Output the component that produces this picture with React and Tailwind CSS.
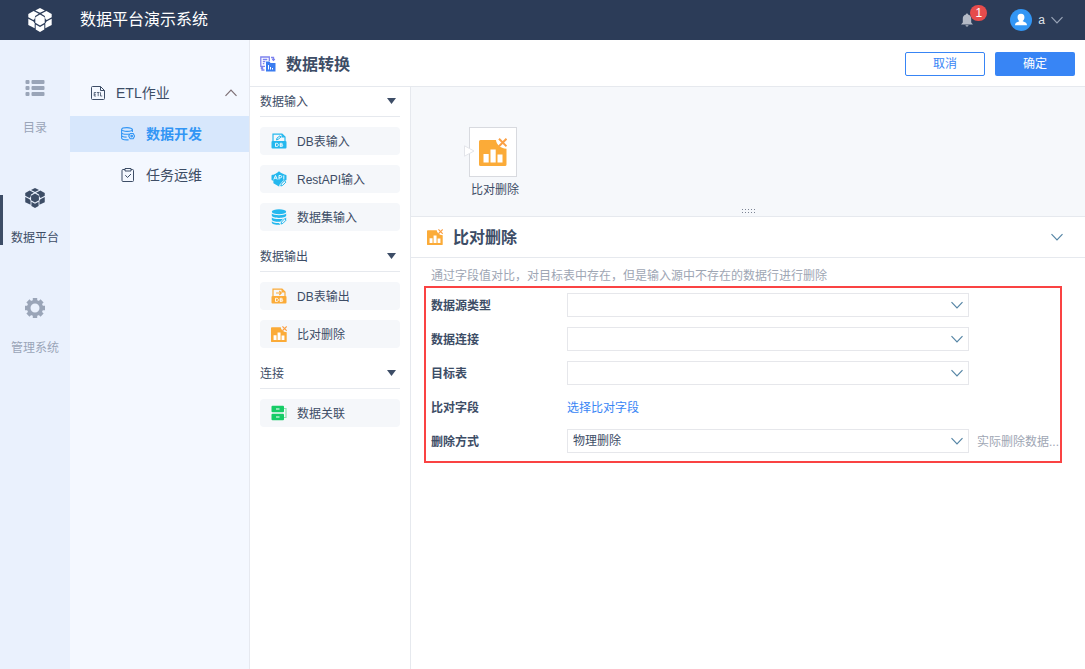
import React from "react";

function CubeIcon({ className }) {
  return (
    <svg viewBox="0 0 24 24" className={className} fill="currentColor">
      <path d="M12 0l4.800 2.400L12 4.800 7.200 2.400z" />
      <path d="M5.600 3l5.200 2.700-3.600 2.200-.6 3L5.300 12 .3 9.200V6z" />
      <path d="M18.400 3l-5.200 2.700 3.600 2.200.6 3 1.300 1.100 5-2.800V6z" />
      <path d="M12 6.600l4.700 2.700v5.400L12 17.400l-4.700-2.700V9.300z" />
      <path d="M.3 10.800l5.200 2.600 1.200 2v4.800L.3 17z" />
      <path d="M23.700 10.800l-5.200 2.600-1.200 2v4.800l6.400-3.200z" />
      <path d="M7.700 16.600l4.300 2.300 4.300-2.300v5L12 24l-4.300-2.400z" />
    </svg>
  );
}

function ListIcon({ className }) {
  return (
    <svg viewBox="0 0 20 20" className={className} fill="currentColor">
      {[2, 8, 14].map((y) => (
        <g key={y}>
          <rect x="0.500" y={y} width="4" height="4" rx="1" />
          <rect x="6.500" y={y} width="13" height="4" rx="1" />
        </g>
      ))}
    </svg>
  );
}

function GearIcon({ className }) {
  return (
    <svg viewBox="0 0 20 20" className={className} fill="none" stroke="currentColor">
      <circle cx="10" cy="10" r="6.300" strokeWidth="3.600" />
      {[0, 45, 90, 135].map((a) => (
        <path key={a} transform={`rotate(${a} 10 10)`} d="M10 0v3M10 17v3" strokeWidth="4.400" />
      ))}
    </svg>
  );
}

function EtlIcon({ className }) {
  return (
    <svg viewBox="0 0 14 14" className={className} fill="none" stroke="currentColor">
      <path d="M9.500.5h-8a1 1 0 0 0-1 1v11a1 1 0 0 0 1 1h11a1 1 0 0 0 1-1v-8zM9.500.5v4h4" />
      <path strokeWidth=".8" d="M5 6.500H3.200v3.500H5M3.200 8.300h1.600M5.800 6.500h2.700M7.200 6.500v3.700M9.500 6.300V10h1.700" />
    </svg>
  );
}

function StackIcon({ className }) {
  return (
    <svg viewBox="0 0 14 14" className={className} fill="none" stroke="currentColor" strokeWidth="1.100">
      <ellipse cx="6" cy="2.500" rx="5.400" ry="1.900" />
      <path d="M.6 2.500v8.500c0 1 2.200 1.900 5 1.900h2M.6 5.400c0 1 2.400 1.900 5.400 1.900.8 0 1.500 0 2.200-.2M.6 8.200c0 1 2.200 1.900 5 1.900M11.400 2.500v2.600" />
      <path d="M9.200 6.500h3l1.400 2.600-1.400 2.600h-3L7.700 9.100z" />
      <circle cx="10.700" cy="9.100" r=".8" />
    </svg>
  );
}

function TaskIcon({ className }) {
  return (
    <svg viewBox="0 0 14 14" className={className} fill="none" stroke="currentColor">
      <path d="M4 1.500H2a1 1 0 0 0-1 1v10a1 1 0 0 0 1 1h9.500a1 1 0 0 0 1-1v-10a1 1 0 0 0-1-1H10" />
      <path d="M4 .5h6v2.500H4zM4.300 7.200l2.200 2.300L10 6" />
    </svg>
  );
}

function TransformIcon({ className }) {
  return (
    <svg viewBox="0 0 16 16" className={className}>
      <g fill="none" stroke="#7d83ee" strokeWidth="1.300">
        <path d="M5 10.300H.8V1h8.500v4M2.800 3.500h4.500M2.800 5.600h2.500M2.800 7.700h1.500" />
        <path d="M11 1.500h2.500v2.500M12.200 3l1.300 1.300L14.800 3M4.500 14H2v-2.500M.8 12.500L2 11.300l1.200 1.200" />
      </g>
      <path fill="#3a7cf0" d="M6 5.500h3.500l1 1.500H15.500V15.500H6z" />
      <path stroke="#fff" strokeWidth="1" d="M8.500 9v4.500M10.500 11v2.500M12.500 12v1.500" />
    </svg>
  );
}

function DbFileIcon({ className, output }) {
  return (
    <svg viewBox="0 0 16 16" className={className}>
      <path d="M2 8V1.200h9L14 4v4" fill="none" stroke="currentColor" strokeWidth="1.200" />
      <path d="M10.500 1v3.500H14z" fill="currentColor" />
      {output ? (
        <path d="M5 5h5M8.300 3L10.300 5 8.300 7" fill="none" stroke="currentColor" strokeWidth="1.100" />
      ) : (
        <path d="M5.500 7l.5-2 3-2.200 1 1.200-2.800 2.300z" fill="none" stroke="currentColor" />
      )}
      <rect x=".5" y="8" width="15" height="7.500" rx="1" fill="currentColor" />
      <path
        fill="none"
        stroke="#fff"
        strokeWidth=".9"
        d="M4.500 10.300v3.200h1.200c2.200 0 2.200-3.200 0-3.200zM9.200 10.300v3.200h1.400c1.500 0 1.400-1.600 0-1.600H9.200h1.300c1.200 0 1.200-1.600 0-1.600z"
      />
    </svg>
  );
}

function ApiIcon({ className }) {
  return (
    <svg viewBox="0 0 16 16" className={className}>
      <path fill="currentColor" d="M8 .3l1.800 1.500 3.800 1.700V11L8 15.500l-5.600-3.200V4L6.200 1.800z" />
      <rect x=".5" y="3.800" width="15" height="5.600" rx="1" fill="currentColor" />
      <path fill="none" stroke="#fff" strokeWidth=".9" d="M2.800 8.500l1.700-4 1.700 4M3.500 7.200h2M8 8.500v-4h1.500c1.600 0 1.600 2.300 0 2.300H8M12.800 4.500v4" />
      <path stroke="#f5f7fa" strokeWidth="4" d="M9.500 15.500L14 10.500" />
      <path fill="none" stroke="currentColor" d="M9.800 15l.5-2 3.200-3.300 1.400 1.400-3.200 3.300z" />
    </svg>
  );
}

function DatasetIcon({ className }) {
  return (
    <svg viewBox="0 0 16 16" className={className}>
      <g fill="currentColor">
        <ellipse cx="8" cy="2.800" rx="7.200" ry="2.500" />
        <path d="M.8 4.600c2 2.100 12.400 2.100 14.400 0v2c0 3.200-14.400 3.200-14.400 0z" />
        <path d="M.8 8.400c2 2.100 12.400 2.100 14.400 0v2c0 3.200-14.400 3.200-14.400 0z" />
        <path d="M.8 12.200c2 1.900 6 2 8.500 1.700v1.900C5.500 16 .8 15.500.8 13.500z" />
      </g>
      <path stroke="#f5f7fa" strokeWidth="4" d="M9.500 15.500l5-5.500" />
      <path fill="none" stroke="currentColor" d="M10 15l.5-2 3.200-3.300 1.400 1.400-3.200 3.300z" />
    </svg>
  );
}

function CompareDeleteIcon({ className }) {
  return (
    <svg viewBox="0 0 28 28" className={className}>
      <path fill="#fbab38" d="M1.500 2H17c.5 4.500 4 8.200 10.500 8.800v15.700a1.500 1.500 0 0 1-1.500 1.500H1.500A1.500 1.500 0 0 1 0 26.500v-23A1.500 1.500 0 0 1 1.500 2z" />
      <path fill="#fff" d="M4.500 16h5.200v8.500H4.500zM11.500 11.500h5.200v13h-5.200zM18.500 16.500h5v8h-5z" />
      <path fill="none" stroke="#fba045" strokeWidth="2" d="M20 .8l7.500 7.500M27.500.8L20 8.300" />
    </svg>
  );
}

function JoinIcon({ className }) {
  return (
    <svg viewBox="0 0 16 16" className={className}>
      <path fill="none" stroke="#8be0ad" strokeWidth="1.200" d="M12 3.500h3v9h-3" />
      <rect x=".5" y=".8" width="12.500" height="6.500" rx="1" fill="#16cc66" />
      <rect x=".5" y="8.700" width="12.500" height="6.500" rx="1" fill="#16cc66" />
      <path stroke="#fff" strokeWidth="1.200" d="M5 4h3.500M5 12h3.500" />
    </svg>
  );
}

function Chevron({ className, up }) {
  return (
    <svg viewBox="0 0 12 12" className={className} fill="none" stroke="currentColor" strokeWidth="1.200">
      <path d={up ? "M.5 8.800L6 3.200l5.500 5.600" : "M.5 3.200L6 8.800l5.500-5.600"} />
    </svg>
  );
}

const NAV = [
  { label: "目录", Icon: ListIcon },
  { label: "数据平台", Icon: CubeIcon, active: true },
  { label: "管理系统", Icon: GearIcon },
];

const GROUPS = [
  {
    title: "数据输入",
    items: [
      { label: "DB表输入", icon: <DbFileIcon className="size-4 text-[#25b8ee]" /> },
      { label: "RestAPI输入", icon: <ApiIcon className="size-4 text-[#25b8ee]" /> },
      { label: "数据集输入", icon: <DatasetIcon className="size-4 text-[#25b8ee]" /> },
    ],
  },
  {
    title: "数据输出",
    items: [
      { label: "DB表输出", icon: <DbFileIcon output className="size-4 text-[#fbab38]" /> },
      { label: "比对删除", icon: <CompareDeleteIcon className="size-4" /> },
    ],
  },
  {
    title: "连接",
    items: [{ label: "数据关联", icon: <JoinIcon className="size-4" /> }],
  },
];

function TopBar() {
  return (
    <header className="flex h-10 shrink-0 items-center bg-[#2c3c58] pr-[22px] pl-7 text-white">
      <CubeIcon className="size-6" />
      <h1 className="ml-7 flex-1 text-base">数据平台演示系统</h1>
      <button type="button" aria-label="通知" className="relative mr-9 block">
        <svg viewBox="0 0 14 14" className="size-3.5 text-[#b4bac6]" fill="currentColor">
          <path d="M7 .5c.6 0 1 .4 1 1 2 .5 3.200 2 3.200 4v4l1.800 2H1l1.800-2v-4c0-2 1.200-3.500 3.200-4 0-.6.4-1 1-1zM5.500 12.300h3c0 1.600-3 1.600-3 0z" />
        </svg>
        <span className="absolute -top-2 left-2.5 flex h-4 w-[17px] items-center justify-center rounded-full bg-[#e64c4c] text-xs">
          1
        </span>
      </button>
      <button type="button" className="flex items-center text-xs">
        <svg viewBox="0 0 22 22" className="size-[22px]">
          <circle cx="11" cy="11" r="11" fill="#3296f5" />
          <path fill="#fff" d="M11 4.800c4.800 0 3.800 6 1.600 7.200.2.900 4.400.8 4.400 4.200H5c0-3.400 4.200-3.300 4.400-4.200C7.200 10.800 6.200 4.800 11 4.800z" />
        </svg>
        <span className="mx-1.5 text-[#dfe3ea]">a</span>
        <Chevron className="size-3 text-[#9aa5b8]" />
      </button>
    </header>
  );
}

function MainNav() {
  return (
    <nav className="w-[70px] shrink-0 bg-[#eaf1fd] pt-[15px]">
      {NAV.map(({ label, Icon, active }) => (
        <a
          key={label}
          href="#"
          className={`relative flex h-[110px] flex-col items-center gap-[21px] pt-[23px] text-xs ${active ? "text-[#3d4d66]" : "text-[#9aa5b8]"}`}
        >
          {active && <span className="absolute top-[30px] left-0 h-[50px] w-[3px] bg-[#3d4d66]" />}
          <Icon className="size-5" />
          <span className="leading-[18px]">{label}</span>
        </a>
      ))}
    </nav>
  );
}

function SubNav() {
  return (
    <nav className="flex w-[180px] shrink-0 flex-col gap-[5px] border-r border-[#e6e9f0] bg-[#f4f8ff] pt-[35px] text-sm text-[#3d4d66]">
      <button type="button" className="flex h-9 items-center pr-3 pl-[21px]">
        <EtlIcon className="size-3.5" />
        <span className="ml-[11px] flex-1 text-left">ETL作业</span>
        <Chevron up className="size-3 text-[#7d6f75]" />
      </button>
      <a href="#" className="flex h-9 items-center gap-[11px] bg-[#d7e7fc] pl-[51px] font-bold text-[#3296f5]">
        <StackIcon className="size-3.5" />
        数据开发
      </a>
      <a href="#" className="flex h-9 items-center gap-[11px] pl-[51px]">
        <TaskIcon className="size-3.5" />
        任务运维
      </a>
    </nav>
  );
}

function Palette() {
  return (
    <aside className="flex w-[161px] shrink-0 flex-col gap-[11px] border-r border-[#e6e9ee] px-2.5 text-xs">
      {GROUPS.map((g) => (
        <section key={g.title}>
          <button type="button" className="flex h-[30px] w-full items-center justify-between border-b border-[#e6e9ee] pr-1">
            {g.title}
            <svg viewBox="0 0 9 8" className="h-2 w-[9px]" fill="currentColor">
              <path d="M0 0h9L4.500 6z" />
            </svg>
          </button>
          <ul className="mt-2.5 flex flex-col gap-2.5">
            {g.items.map((it) => (
              <li key={it.label} className="flex h-7 items-center gap-2.5 rounded-sm bg-[#f5f7fa] pl-[11px]">
                {it.icon}
                <span className="pt-0.5">{it.label}</span>
              </li>
            ))}
          </ul>
        </section>
      ))}
    </aside>
  );
}

function Canvas() {
  return (
    <div className="relative flex h-[130px] shrink-0 items-end justify-center border-b border-[#e6e9ee] bg-[#f6f8fb] pb-[3px]">
      <div className="absolute top-10 left-[58px] text-xs">
        <div className="flex h-[50px] w-12 items-center justify-center border border-[#d8dadf] bg-white">
          <CompareDeleteIcon className="size-7" />
        </div>
        <p className="mt-[5px] pl-0.5 whitespace-nowrap">比对删除</p>
        <svg viewBox="0 0 11 12" className="absolute top-[18px] -left-[5px] h-3 w-[11px]">
          <path d="M.5.8L10 6 .5 11.200z" fill="#fff" stroke="#e3e5ea" />
        </svg>
      </div>
      <svg viewBox="0 0 13 4" className="h-1 w-[13px]" fill="#7c8494">
        {[0, 3, 6, 9, 12].map((x) => (
          <path key={x} d={`M${x} 0h1v1h-1zM${x} 3h1v1h-1z`} />
        ))}
      </svg>
    </div>
  );
}

function SelectRow({ id, label, value, hint }) {
  return (
    <div className="flex h-6 items-center">
      <label htmlFor={id} className="w-[136px] shrink-0 pt-0.5 font-bold">
        {label}
      </label>
      <div className="relative flex-1">
        <select
          id={id}
          defaultValue={value}
          className="block h-6 w-full appearance-none border border-[#e6e7eb] bg-white pr-6 pl-[5px]"
        >
          <option>{value}</option>
        </select>
        <Chevron className="pointer-events-none absolute top-1.5 right-1.5 size-3 text-[#5585a5]" />
      </div>
      <span className="ml-2 w-[83px] pt-0.5 whitespace-nowrap text-[#9ea6b4]">{hint}</span>
    </div>
  );
}

function Inspector() {
  return (
    <section className="text-xs">
      <div className="flex h-[41px] items-center border-b border-[#e6e9ee] pr-[22px] pl-4">
        <CompareDeleteIcon className="size-4" />
        <h3 className="ml-2.5 flex-1 pt-0.5 text-base font-bold">比对删除</h3>
        <button type="button" aria-label="收起">
          <Chevron className="block size-3 text-[#5585a5]" />
        </button>
      </div>
      <p className="mt-2 pl-5 leading-5 text-[#9ea6b4]">
        通过字段值对比，对目标表中存在，但是输入源中不存在的数据行进行删除
      </p>
      <form className="mr-[23px] ml-[13px] flex flex-col gap-2.5 border-2 border-[#fa4343] pt-[5px] pb-2 pl-[5px]">
        <SelectRow id="source-type" label="数据源类型" value="" />
        <SelectRow id="connection" label="数据连接" value="" />
        <SelectRow id="target" label="目标表" value="" />
        <div className="flex h-6 items-center pt-0.5">
          <span className="w-[136px] shrink-0 font-bold">比对字段</span>
          <a href="#" className="text-[#3885f5]">
            选择比对字段
          </a>
        </div>
        <SelectRow id="mode" label="删除方式" value="物理删除" hint="实际删除数据..." />
      </form>
    </section>
  );
}

export default function App() {
  return (
    <div className="flex min-h-screen flex-col bg-white font-['Liberation_Sans','Noto_Sans_CJK_SC',sans-serif] text-[#3d4d66]">
      <TopBar />
      <div className="flex flex-1">
        <MainNav />
        <SubNav />
        <main className="flex min-w-0 flex-1 flex-col">
          <div className="flex h-[47px] shrink-0 items-center border-b border-[#e6e9ee] px-2.5 pt-0.5">
            <TransformIcon className="size-4" />
            <h2 className="ml-2.5 flex-1 pt-0.5 text-base font-bold">数据转换</h2>
            <div className="flex gap-2.5 text-xs">
              <button type="button" className="h-6 w-20 rounded-xs border border-[#3885f5] text-[#3885f5]">
                取消
              </button>
              <button type="button" className="h-6 w-20 rounded-xs bg-[#3885f5] text-white">
                确定
              </button>
            </div>
          </div>
          <div className="flex flex-1">
            <Palette />
            <div className="flex min-w-0 flex-1 flex-col">
              <Canvas />
              <Inspector />
            </div>
          </div>
        </main>
      </div>
    </div>
  );
}
